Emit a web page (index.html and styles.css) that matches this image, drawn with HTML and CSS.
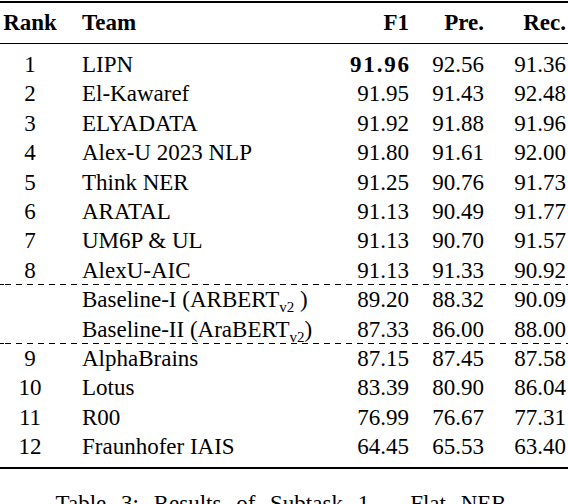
FILE: index.html
```html
<!DOCTYPE html>
<html>
<head>
<meta charset="utf-8">
<link rel="stylesheet" href="styles.css">
</head>
<body>
<div class="page">
  <div class="table">
    <div class="row head">
      <div class="rank">Rank</div>
      <div class="team">Team</div>
      <div class="num">F1</div>
      <div class="num">Pre.</div>
      <div class="num last">Rec.</div>
    </div>
    <div class="body">
      <div class="row"><div class="rank">1</div><div class="team">LIPN</div><div class="num best">91.96</div><div class="num">92.56</div><div class="num last">91.36</div></div>
      <div class="row"><div class="rank">2</div><div class="team">El-Kawaref</div><div class="num">91.95</div><div class="num">91.43</div><div class="num last">92.48</div></div>
      <div class="row"><div class="rank">3</div><div class="team">ELYADATA</div><div class="num">91.92</div><div class="num">91.88</div><div class="num last">91.96</div></div>
      <div class="row"><div class="rank">4</div><div class="team">Alex-U 2023 NLP</div><div class="num">91.80</div><div class="num">91.61</div><div class="num last">92.00</div></div>
      <div class="row"><div class="rank">5</div><div class="team">Think NER</div><div class="num">91.25</div><div class="num">90.76</div><div class="num last">91.73</div></div>
      <div class="row"><div class="rank">6</div><div class="team">ARATAL</div><div class="num">91.13</div><div class="num">90.49</div><div class="num last">91.77</div></div>
      <div class="row"><div class="rank">7</div><div class="team">UM6P &amp; UL</div><div class="num">91.13</div><div class="num">90.70</div><div class="num last">91.57</div></div>
      <div class="row dash-after"><div class="rank">8</div><div class="team">AlexU-AIC</div><div class="num">91.13</div><div class="num">91.33</div><div class="num last">90.92</div></div>
      <div class="row"><div class="rank"></div><div class="team">Baseline-I (ARBERT<sub>v2</sub> )</div><div class="num">89.20</div><div class="num">88.32</div><div class="num last">90.09</div></div>
      <div class="row dash-after"><div class="rank"></div><div class="team">Baseline-II (AraBERT<sub>v2</sub>)</div><div class="num">87.33</div><div class="num">86.00</div><div class="num last">88.00</div></div>
      <div class="row"><div class="rank">9</div><div class="team">AlphaBrains</div><div class="num">87.15</div><div class="num">87.45</div><div class="num last">87.58</div></div>
      <div class="row"><div class="rank">10</div><div class="team">Lotus</div><div class="num">83.39</div><div class="num">80.90</div><div class="num last">86.04</div></div>
      <div class="row"><div class="rank">11</div><div class="team">R00</div><div class="num">76.99</div><div class="num">76.67</div><div class="num last">77.31</div></div>
      <div class="row"><div class="rank">12</div><div class="team">Fraunhofer IAIS</div><div class="num">64.45</div><div class="num">65.53</div><div class="num last">63.40</div></div>
    </div>
  </div>
  <p class="caption">Table 3: Results of Subtask 1 – Flat NER.</p>
</div>
</body>
</html>
```

FILE: styles.css
```css
html, body {
  margin: 0;
  padding: 0;
  background: #fff;
}
.page {
  width: 568px;
  height: 504px;
  overflow: hidden;
  font-family: "Liberation Serif", "Times New Roman", serif;
  font-size: 23px;
  color: #000;
}
.table {
  margin-top: 1px;
  border-top: 2px solid #000;
  border-bottom: 2px solid #000;
}
.row {
  display: grid;
  grid-template-columns: 60px 1fr 80px 75px 84px;
  align-items: center;
  height: 29.4px;
  line-height: 29.4px;
  position: relative;
}
.head {
  height: 40px;
  line-height: 40px;
  font-weight: bold;
  border-bottom: 1px solid #000;
}
.body {
  padding: 6px 0 6px;
}
.rank {
  text-align: center;
}
.team {
  padding-left: 22px;
  white-space: nowrap;
}
.num {
  text-align: right;
}
.num.last {
  padding-right: 2px;
}
.best {
  font-weight: bold;
  letter-spacing: 1.8px;
  margin-right: -1.8px;
}
sub {
  font-size: 15px;
  line-height: 0;
  vertical-align: -5px;
}
.dash-after::after {
  content: "";
  position: absolute;
  left: 0;
  right: 0;
  bottom: 0;
  height: 1px;
  background: repeating-linear-gradient(to right, #000 0 6px, transparent 6px 11px);
  background-position: 5px 0;
}
.caption {
  margin: 20px 0 0;
  text-align: center;
  line-height: 29px;
  word-spacing: 9px;
  white-space: nowrap;
}
```
